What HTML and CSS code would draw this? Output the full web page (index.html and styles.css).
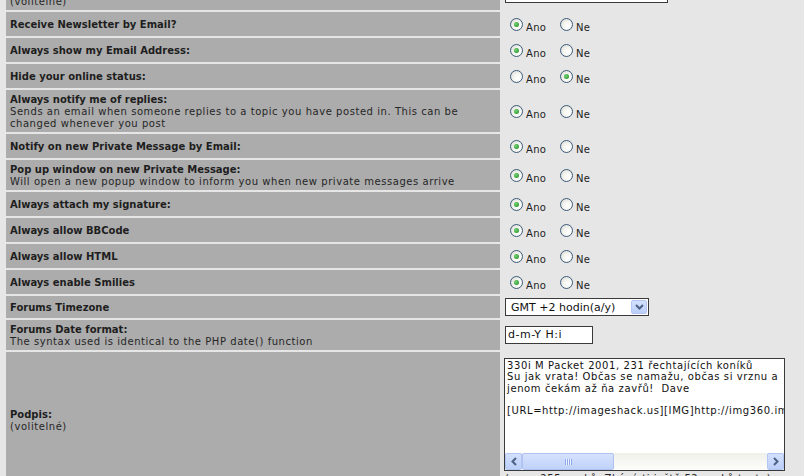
FILE: index.html
```html
<!DOCTYPE html>
<html lang="cs">
<head>
<meta charset="utf-8">
<title>Profil</title>
<link rel="stylesheet" href="styles.css">
</head>
<body>
<div class="page">
  <div class="form">
    <div class="label"><span class="title">Zájmy:</span><span class="explain">(volitelné)</span></div>
    <div class="field field-top"><span class="textbox textbox-wide"></span></div>

    <div class="label"><span class="title">Receive Newsletter by Email?</span></div>
    <div class="field"><div class="choice"><span class="radio on"></span><span class="opt opt-yes">Ano</span><span class="radio"></span><span class="opt">Ne</span></div></div>

    <div class="label"><span class="title">Always show my Email Address:</span></div>
    <div class="field"><div class="choice"><span class="radio on"></span><span class="opt opt-yes">Ano</span><span class="radio"></span><span class="opt">Ne</span></div></div>

    <div class="label"><span class="title">Hide your online status:</span></div>
    <div class="field"><div class="choice"><span class="radio"></span><span class="opt opt-yes">Ano</span><span class="radio on"></span><span class="opt">Ne</span></div></div>

    <div class="label"><span class="title">Always notify me of replies:</span><span class="explain">Sends an email when someone replies to a topic you have posted in. This can be changed whenever you post</span></div>
    <div class="field"><div class="choice"><span class="radio on"></span><span class="opt opt-yes">Ano</span><span class="radio"></span><span class="opt">Ne</span></div></div>

    <div class="label"><span class="title">Notify on new Private Message by Email:</span></div>
    <div class="field"><div class="choice"><span class="radio on"></span><span class="opt opt-yes">Ano</span><span class="radio"></span><span class="opt">Ne</span></div></div>

    <div class="label"><span class="title">Pop up window on new Private Message:</span><span class="explain">Will open a new popup window to inform you when new private messages arrive</span></div>
    <div class="field"><div class="choice"><span class="radio on"></span><span class="opt opt-yes">Ano</span><span class="radio"></span><span class="opt">Ne</span></div></div>

    <div class="label"><span class="title">Always attach my signature:</span></div>
    <div class="field"><div class="choice"><span class="radio on"></span><span class="opt opt-yes">Ano</span><span class="radio"></span><span class="opt">Ne</span></div></div>

    <div class="label"><span class="title">Always allow BBCode</span></div>
    <div class="field"><div class="choice"><span class="radio on"></span><span class="opt opt-yes">Ano</span><span class="radio"></span><span class="opt">Ne</span></div></div>

    <div class="label"><span class="title">Always allow HTML</span></div>
    <div class="field"><div class="choice"><span class="radio on"></span><span class="opt opt-yes">Ano</span><span class="radio"></span><span class="opt">Ne</span></div></div>

    <div class="label"><span class="title">Always enable Smilies</span></div>
    <div class="field"><div class="choice"><span class="radio on"></span><span class="opt opt-yes">Ano</span><span class="radio"></span><span class="opt">Ne</span></div></div>

    <div class="label"><span class="title">Forums Timezone</span></div>
    <div class="field field-tight">
      <div class="select"><span class="select-value">GMT +2 hodin(a/y)</span><span class="xp-btn drop"><svg width="9" height="6" viewBox="0 0 9 6"><polyline points="1,1 4.5,4.5 8,1" fill="none" stroke="#4d6185" stroke-width="2"/></svg></span></div>
    </div>

    <div class="label"><span class="title">Forums Date format:</span><span class="explain">The syntax used is identical to the PHP date() function</span></div>
    <div class="field"><span class="textbox textbox-date">d-m-Y H:i</span></div>

    <div class="label"><span class="title">Podpis:</span><span class="explain">(volitelné)</span></div>
    <div class="field field-sig">
      <div class="textarea">
        <div class="textarea-text">330i M Packet 2001, 231 řechtajících koníků
Su jak vrata! Občas se namažu, občas si vrznu a
jenom čekám až ňa zavřů!  Dave

[URL=http://imageshack.us][IMG]http://img360.imageshack.us/img360/4021/podpis.jpg[/IMG][/URL]</div>
        <div class="hscroll">
          <span class="xp-btn arrow"><svg width="6" height="9" viewBox="0 0 6 9"><polyline points="5,1 1.5,4.5 5,8" fill="none" stroke="#4d6185" stroke-width="2"/></svg></span>
          <span class="thumb"><span class="grip"></span></span>
          <span class="track"></span>
          <span class="xp-btn arrow"><svg width="6" height="9" viewBox="0 0 6 9"><polyline points="1,1 4.5,4.5 1,8" fill="none" stroke="#4d6185" stroke-width="2"/></svg></span>
        </div>
      </div>
      <span class="sig-note">(max. 255 znaků. Zbývá ti ještě 52 znaků textu)</span>
    </div>
  </div>
</div>
</body>
</html>
```

FILE: styles.css
```css
* { box-sizing: border-box; }

html, body {
  margin: 0;
  padding: 0;
}

body {
  background: #e6e6e6;
  font-family: "DejaVu Sans", Verdana, sans-serif;
  color: #222;
  height: 476px;
  overflow: hidden;
}

.page {
  padding-left: 6px;
}

.form {
  display: grid;
  grid-template-columns: 494px 1fr;
  gap: 2px;
  margin-top: -20px;
}

.label {
  background: #acacac;
  padding: 4px 4px 2px;
  display: flex;
  flex-direction: column;
  justify-content: center;
  font-size: 10px;
  line-height: 12px;
}

.title {
  font-weight: bold;
  color: #1e1e1e;
}

.explain {
  color: #262626;
  letter-spacing: 0.55px;
}

.field {
  padding: 3px;
  display: flex;
  align-items: center;
}

.field-tight {
  padding: 2px 3px;
}

.field-top {
  align-items: flex-end;
  padding-bottom: 7px;
}

.choice {
  display: flex;
  align-items: flex-start;
  height: 18px;
}

.radio {
  width: 13px;
  height: 13px;
  margin: 3px 3px 0 5px;
  border-radius: 50%;
  border: 1px solid #3c5b7a;
  background: radial-gradient(circle at 65% 65%, #ffffff 0, #f4f4f0 45%, #d4d4cc 100%);
  display: flex;
  align-items: center;
  justify-content: center;
  flex: none;
}

.radio.on::after {
  content: "";
  width: 5px;
  height: 5px;
  border-radius: 50%;
  background: radial-gradient(circle at 40% 40%, #7ad27a 0, #2f9f2f 70%);
}

.opt {
  font-size: 10px;
  line-height: 12px;
  margin-top: 7px;
  color: #222;
  letter-spacing: 0.3px;
}

.opt-yes {
  width: 29px;
}

.textbox {
  display: block;
  height: 18px;
  border: 1px solid #3a3a3a;
  background: #fff;
  font-size: 11px;
  line-height: 16px;
  padding-left: 2px;
  color: #111;
  letter-spacing: 0.5px;
}

.textbox-wide {
  width: 163px;
}

.textbox-date {
  width: 88px;
}

.select {
  width: 144px;
  height: 18px;
  border: 1px solid #3a3a3a;
  background: #fff;
  display: flex;
  align-items: center;
  justify-content: space-between;
  padding: 0 1px 0 5px;
  font-size: 11px;
  color: #111;
}

.xp-btn {
  display: flex;
  align-items: center;
  justify-content: center;
  background: linear-gradient(#d3e0fd, #bccff9);
  border: 1px solid #b3c6f3;
  border-radius: 2px;
}

.drop {
  width: 16px;
  height: 14px;
}

.field-sig {
  flex-direction: column;
  align-items: flex-start;
}

.textarea {
  width: 281px;
  height: 113px;
  margin-top: 3px;
  margin-left: -1px;
  border: 1px solid #3a3a3a;
  background: #fff;
  display: flex;
  flex-direction: column;
  overflow: hidden;
}

.textarea-text {
  flex: 1;
  white-space: pre;
  overflow: hidden;
  font-size: 10px;
  line-height: 11.25px;
  padding: 1px 0 0 2px;
  color: #111;
  letter-spacing: 0.6px;
}

.hscroll {
  height: 17px;
  display: flex;
  background: linear-gradient(#f0f0ea, #fdfdfb);
}

.arrow {
  width: 17px;
  height: 17px;
}

.thumb {
  width: 92px;
  height: 17px;
  background: linear-gradient(#d6e2fd, #c0d2fa);
  border: 1px solid #aec1f0;
  border-radius: 2px;
  display: flex;
  align-items: center;
  justify-content: center;
}

.grip {
  width: 7px;
  height: 6px;
  background: repeating-linear-gradient(90deg, #8ea7e6 0, #8ea7e6 1px, #eef3ff 1px, #eef3ff 2px);
}

.track {
  flex: 1;
}

.sig-note {
  margin-top: 2px;
  font-size: 10px;
  line-height: 12px;
  color: #222;
  white-space: nowrap;
  letter-spacing: 0.55px;
}
```
